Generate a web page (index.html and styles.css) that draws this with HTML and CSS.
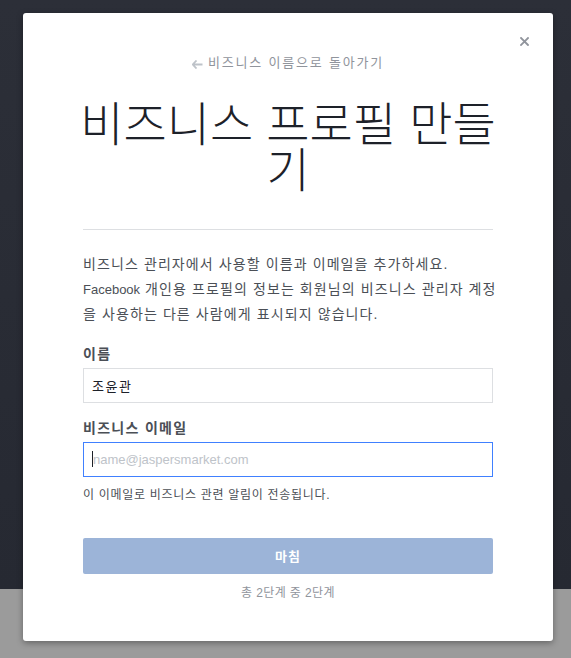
FILE: index.html
```html
<!DOCTYPE html>
<html lang="ko">
<head>
<meta charset="utf-8">
<link rel="stylesheet" href="styles.css">
</head>
<body>
<div class="modal">
  <button class="close" aria-label="닫기">
    <svg width="9" height="9" viewBox="0 0 9 9"><path d="M1 1L8 8M8 1L1 8" stroke="#90949c" stroke-width="1.8" stroke-linecap="square"/></svg>
  </button>
  <div class="back">
    <svg class="arrow" width="11" height="9" viewBox="0 0 11 9"><path d="M4.5 0.5L0.8 4.5L4.5 8.5M1.2 4.5H10.5" fill="none" stroke="#bec3c9" stroke-width="1.8"/></svg>
    <span>비즈니스 이름으로 돌아가기</span>
  </div>
  <h1 class="title">비즈니스 프로필 만들기</h1>
  <hr class="divider">
  <p class="intro">비즈니스 관리자에서 사용할 이름과 이메일을 추가하세요.<br><span class="latin">Facebook</span> 개인용 프로필의 정보는 회원님의 비즈니스 관리자 계정<br>을 사용하는 다른 사람에게 표시되지 않습니다.</p>
  <label class="label label-first">이름</label>
  <div class="input"><span class="value">조윤관</span></div>
  <label class="label label-second">비즈니스 이메일</label>
  <div class="input input-focus"><span class="caret"></span><span class="placeholder">name@jaspersmarket.com</span></div>
  <p class="helper">이 이메일로 비즈니스 관련 알림이 전송됩니다.</p>
  <button class="finish">마침</button>
  <p class="step">총 2단계 중 2단계</p>
</div>
</body>
</html>
```
FILE: styles.css
```css
html, body {
  margin: 0;
  padding: 0;
}
body {
  width: 571px;
  height: 658px;
  overflow: hidden;
  background: linear-gradient(#2c2f38 0, #262932 589px, #9b9b9b 589px, #9b9b9b 100%);
  font-family: "Liberation Sans", "Noto Sans CJK KR", sans-serif;
  padding-top: 13px;
  box-sizing: border-box;
}
.modal {
  position: relative;
  margin-left: 23px;
  width: 530px;
  height: 628px;
  box-sizing: border-box;
  background: #fff;
  border-radius: 3px;
  box-shadow: 0 2px 6px rgba(0,0,0,0.35);
  padding: 41px 60px 0;
}
.close {
  position: absolute;
  top: 19px;
  right: 20px;
  width: 18px;
  height: 18px;
  padding: 0;
  border: 0;
  background: none;
  display: flex;
  align-items: center;
  justify-content: center;
}
.back {
  display: flex;
  justify-content: center;
  align-items: center;
  gap: 5px;
  height: 18px;
  font-size: 13px;
  letter-spacing: 1.8px;
  color: #90949c;
  line-height: 18px;
}
.arrow {
  margin-top: 2px;
}
.title {
  margin: 26px -12px 0;
  font-family: "Noto Sans CJK KR", sans-serif;
  font-weight: 300;
  font-size: 47px;
  line-height: 46px;
  color: #1d2129;
  text-align: center;
}
.divider {
  margin: 39px 0 0;
  border: 0;
  height: 1px;
  background: #dddfe2;
}
.intro {
  margin: 22px 0 0;
  font-size: 14px;
  line-height: 24.5px;
  letter-spacing: 1.1px;
  white-space: nowrap;
  color: #4b4f56;
}
.latin {
  font-size: 13px;
  letter-spacing: 0;
}
.label {
  display: block;
  font-size: 14px;
  line-height: 18px;
  font-weight: bold;
  letter-spacing: 1.3px;
  color: #4b4f56;
}
.label-first { margin-top: 18px; }
.label-second { margin-top: 16px; }
.input {
  margin-top: 5px;
  height: 35px;
  box-sizing: border-box;
  border: 1px solid #dddfe2;
  display: flex;
  align-items: center;
  padding: 0 8px;
  font-size: 13px;
}
.value {
  color: #1d2129;
  letter-spacing: 1.5px;
}
.input-focus {
  border-color: #4080ff;
}
.caret {
  width: 1px;
  height: 16px;
  background: #1d2129;
}
.placeholder {
  color: #bec3c9;
  font-size: 13px;
}
.helper {
  margin: 10px 0 0;
  font-size: 12px;
  line-height: 16px;
  letter-spacing: 0.7px;
  color: #4b4f56;
}
.finish {
  display: block;
  width: 100%;
  margin-top: 35px;
  height: 36px;
  border: 0;
  border-radius: 2px;
  background: #9cb4d8;
  color: #fff;
  font-family: inherit;
  font-size: 13px;
  letter-spacing: 1px;
  font-weight: bold;
}
.step {
  margin: 11px 0 0;
  text-align: center;
  font-size: 12px;
  line-height: 16px;
  letter-spacing: 0.4px;
  color: #90949c;
}
```
